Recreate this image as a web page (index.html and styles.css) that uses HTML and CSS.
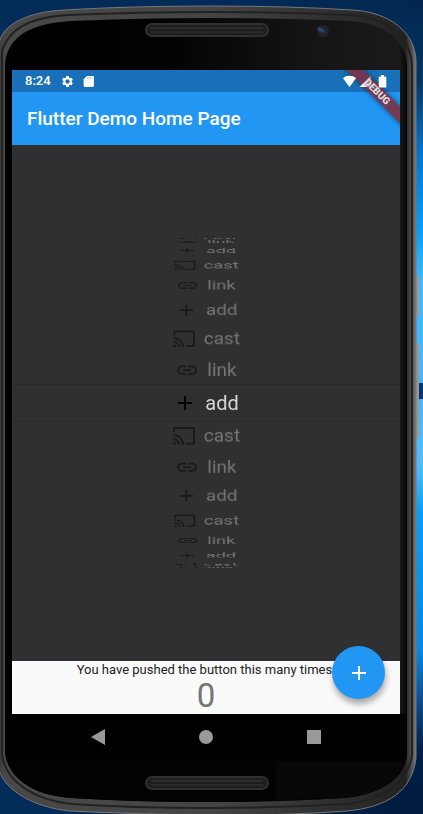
FILE: index.html
```html
<!DOCTYPE html>
<html lang="en">
<head>
<meta charset="utf-8">
<meta name="viewport" content="width=device-width, initial-scale=1">
<title>Flutter Demo Home Page</title>
<link rel="stylesheet" href="styles.css">
</head>
<body>
<svg class="defs" aria-hidden="true">
  <defs>
    <symbol id="cast" viewBox="0 0 24 24"><path d="M21 3H3c-1.100 0-2 .9-2 2v3h2V5h18v14h-7v2h7c1.100 0 2-.9 2-2V5c0-1.100-.9-2-2-2zM1 18v3h3c0-1.660-1.340-3-3-3zm0-4v2c2.760 0 5 2.240 5 5h2c0-3.870-3.130-7-7-7zm0-4v2c4.970 0 9 4.030 9 9h2c0-6.080-4.930-11-11-11z"/></symbol>
    <symbol id="link" viewBox="0 0 24 24"><path d="M3.900 12c0-1.710 1.390-3.100 3.100-3.100h4V7H7c-2.760 0-5 2.240-5 5s2.240 5 5 5h4v-1.900H7c-1.710 0-3.100-1.390-3.100-3.100zM8 13h8v-2H8v2zm9-6h-4v1.900h4c1.710 0 3.100 1.390 3.100 3.100s-1.390 3.100-3.100 3.100h-4V17h4c2.760 0 5-2.240 5-5s-2.240-5-5-5z"/></symbol>
    <symbol id="add" viewBox="0 0 24 24"><path d="M19 13h-6v6h-2v-6H5v-2h6V5h2v6h6v2z"/></symbol>
  </defs>
</svg>
<div class="phone">
  <svg class="shell" viewBox="0 0 423 814" preserveAspectRatio="none" aria-hidden="true">
    <defs>
      <linearGradient id="side" x1="0" x2="1" y1="0" y2="0">
        <stop offset="0" stop-color="#3a3a3a"/><stop offset=".015" stop-color="#484848"/>
        <stop offset=".5" stop-color="#454545"/><stop offset=".975" stop-color="#222"/><stop offset=".988" stop-color="#4c4c4c"/><stop offset="1" stop-color="#777"/>
      </linearGradient>
      <linearGradient id="face" x1="0" x2="1" y1="0" y2="0">
        <stop offset="0" stop-color="#000"/><stop offset=".4" stop-color="#020202"/>
        <stop offset=".75" stop-color="#141414"/><stop offset=".98" stop-color="#1a1a1a"/><stop offset="1" stop-color="#050505"/>
      </linearGradient>
      <linearGradient id="fade" x1="0" x2="1" y1="0" y2="0">
        <stop offset=".4" stop-color="#fff"/><stop offset="1" stop-color="#a08d99"/>
      </linearGradient>
    </defs>
    <path d="M416 276h3v40h-3zM416 343h3v95h-3z" fill="#999"/>
    <path d="M-1 44C2 24 28 12 64 10Q130 6 210 6T352 10C390 12 416 33 416 62V758C412 791 388 807 347 811Q280 816 206 815T70 811C32 807 5 790-1 770Z" fill="url(#side)" stroke="#777"/>
    <path d="M2 52C8 28 32 17 68 15Q138 12 210 12T350 15C386 17 411 37 412 65V755C408 784 382 800 345 804Q278 808 206 808T72 804C34 800 6 782 2 755Z" fill="none" stroke="#222" stroke-width="2"/>
    <path d="M5 65C7 35 33 23 72 21Q140 18 210 18T350 21C384 23 406 40 407 65V754C405 779 380 795 343 798Q278 802 206 802T72 798C34 796 6 778 5 750Z" fill="url(#face)"/>
    <path d="M5 714H407V754C405 779 380 795 343 798Q278 802 206 802T72 798C34 796 6 778 5 750Z" fill="#020202"/>
    <path d="M276 761H405C402 780 378 795 343 798L276 800Z" fill="#070707"/>
    <g fill="#1d1d1d" stroke="#303030" stroke-width="2">
      <rect x="146" y="24" width="122" height="12" rx="6"/>
      <rect x="146" y="777" width="122" height="12" rx="6"/>
    </g>
    <path d="M151 28H263M151 781H263" stroke="#3f3f3f" stroke-width="1"/>
    <path d="M151 32H263M151 785H263" stroke="#393939" stroke-width="1"/>
    <circle cx="323" cy="31" r="6" fill="#20232a"/>
    <ellipse cx="321" cy="30" rx="4" ry="2" fill="#2c4468" transform="rotate(25 321 30)"/>
  </svg>
  <main class="screen">
    <div class="status">
      <span class="time">8:24</span>
      <svg class="status-icon" viewBox="0 0 24 24" aria-hidden="true"><path d="M19.430 12.980c.04-.32.07-.64.07-.98s-.03-.66-.07-.98l2.110-1.650c.19-.15.24-.42.12-.64l-2-3.460c-.12-.22-.39-.3-.61-.22l-2.490 1c-.52-.4-1.080-.73-1.690-.98l-.38-2.650C14.460 2.180 14.250 2 14 2h-4c-.25 0-.46.18-.49.42l-.38 2.650c-.61.25-1.170.59-1.690.98l-2.490-1c-.23-.09-.49 0-.61.22l-2 3.460c-.13.22-.07.49.12.64l2.110 1.650c-.04.32-.07.65-.07.98s.03.66.07.98l-2.110 1.650c-.19.15-.24.42-.12.64l2 3.460c.12.22.39.3.61.22l2.490-1c.52.4 1.080.73 1.690.98l.38 2.650c.03.24.24.42.49.42h4c.25 0 .46-.18.49-.42l.38-2.650c.61-.25 1.170-.59 1.690-.98l2.490 1c.23.09.49 0 .61-.22l2-3.460c.12-.22.07-.49-.12-.64l-2.110-1.650zM12 16c-2.210 0-4-1.790-4-4s1.790-4 4-4 4 1.790 4 4-1.790 4-4 4z"/></svg>
      <svg class="status-icon" viewBox="0 0 24 24" aria-hidden="true"><path d="M20 2H9L3 8v12c0 1.100.9 2 2 2h15c1.100 0 2-.9 2-2V4c0-1.100-.9-2-2-2z"/><path d="M10 4h2v4h-2zM14 4h2v4h-2zM18 4h1v4h-1z" fill="#8bb9de"/></svg>
      <svg class="status-icon wifi" viewBox="0 0 24 24" aria-hidden="true"><path d="M12 22 0 6C7 0 17 0 24 6z"/></svg>
      <svg class="status-icon signal" viewBox="0 0 24 24" aria-hidden="true"><path d="M1 22H22V1z" fill="url(#fade)"/></svg>
      <svg class="status-icon battery" viewBox="0 0 24 24" aria-hidden="true"><path d="M9 0h6v3h4v20H5V3h4z"/></svg>
    </div>
    <header class="appbar"><h1>Flutter Demo Home Page</h1></header>
    <div class="ribbon"><span>DEBUG</span></div>
    <section class="picker">
      <div class="band"></div>
      <ul class="wheel">
        <li><svg><use href="#cast"/></svg>cast</li>
        <li><svg><use href="#link"/></svg>link</li>
        <li><svg><use href="#add"/></svg>add</li>
        <li><svg><use href="#cast"/></svg>cast</li>
        <li><svg><use href="#link"/></svg>link</li>
        <li><svg><use href="#add"/></svg>add</li>
        <li><svg><use href="#cast"/></svg>cast</li>
        <li><svg><use href="#link"/></svg>link</li>
        <li class="selected"><svg><use href="#add"/></svg>add</li>
        <li><svg><use href="#cast"/></svg>cast</li>
        <li><svg><use href="#link"/></svg>link</li>
        <li><svg><use href="#add"/></svg>add</li>
        <li><svg><use href="#cast"/></svg>cast</li>
        <li><svg><use href="#link"/></svg>link</li>
        <li><svg><use href="#add"/></svg>add</li>
        <li><svg><use href="#cast"/></svg>cast</li>
        <li><svg><use href="#link"/></svg>link</li>
      </ul>
    </section>
    <section class="counter">
      <p class="caption">You have pushed the button this many times:</p>
      <p class="count">0</p>
      <button class="fab" type="button" aria-label="Increment"><svg><use href="#add"/></svg></button>
    </section>
  </main>
  <nav class="navbar" aria-label="System navigation">
    <button type="button" aria-label="Back"><svg viewBox="0 0 16 16"><path d="M1 8 15 0V16z"/></svg></button>
    <button type="button" aria-label="Home"><svg viewBox="0 0 16 16"><circle cx="8" cy="8" r="7"/></svg></button>
    <button type="button" aria-label="Overview"><svg viewBox="0 0 16 16"><path d="M1 1h14v14H1z"/></svg></button>
  </nav>
</div>
</body>
</html>
```
FILE: styles.css
```css
* { box-sizing: border-box; }

body {
  margin: 0;
  font-family: Roboto, "Liberation Sans", sans-serif;
  background: linear-gradient(90deg, #042c58 0%, #022a58 60%, transparent 97%),
    linear-gradient(#03274f 0, #043564 10%, #0670c4 18%, #0a9cf5 28%, #45b8fa 35%, #48b4f8 47%, #06376c 47%, #06376c 49%, #48b4f8 49%, #55bcfa 57%, #0a9cf5 63%, #0a86e0 80%, #0b4d90 86%, #02204a 92%, #021a3c 100%);
}

.defs { position: absolute; width: 0; height: 0; }

.phone {
  position: relative;
  display: flex;
  flex-direction: column;
  min-height: 100vh;
  padding: 70px 23px 54px 12px;
}

.shell {
  position: absolute;
  inset: 0;
  width: 100%;
  height: 100%;
}

.screen {
  position: relative;
  flex: 1;
  display: flex;
  flex-direction: column;
  background: #2f3032;
}

.status {
  display: flex;
  align-items: center;
  gap: 8px;
  height: 22px;
  padding: 0 11px 0 13px;
  background: #1a70b8;
  color: #fff;
}

.time { font-size: 13px; font-weight: 500; line-height: 22px; margin-right: 2px; }
.status-icon { width: 13px; height: 13px; fill: #fff; }
.wifi { width: 15px; margin-left: auto; }
.signal { margin: 0 -4px 0 -6px; }
.wifi, .signal, .battery { position: relative; z-index: 1; }

.appbar {
  display: flex;
  align-items: center;
  height: 53px;
  padding: 0 15px;
  background: #2196f3;
}

h1 { margin: 0; font-size: 19px; font-weight: 500; line-height: 24px; color: #fff; }

.ribbon {
  position: absolute;
  top: 0;
  right: 0;
  width: 75px;
  height: 75px;
  overflow: hidden;
}

/* The band lies under the status icons, its label over them. */
.ribbon::before,
.ribbon span {
  position: absolute;
  top: 16px;
  right: -37px;
  width: 120px;
  height: 12px;
  transform: rotate(45deg);
}

.ribbon::before {
  content: "";
  background: #7a3348e8;
  box-shadow: 0 0 5px #0008;
}

.ribbon span {
  z-index: 2;
  color: #e6dfe2;
  font-size: 10px;
  font-weight: 900;
  line-height: 12px;
  text-align: center;
  text-shadow: 0 0 2px #5a2c40;
}

.picker {
  flex: 1;
  display: grid;
  align-items: center;
  perspective: 1500px;
}

.picker > * { grid-area: 1 / 1; }

.band {
  height: 38px;
  border: solid #282a2b;
  border-width: 1px 0;
}

/* A cylinder: every row is turned around the horizontal axis of the wheel. */
.wheel {
  display: grid;
  margin: 0;
  padding: 0;
  list-style: none;
  transform: translateZ(-184px);
  transform-style: preserve-3d;
}

.wheel li {
  grid-area: 1 / 1;
  display: flex;
  align-items: center;
  justify-content: center;
  gap: 8px;
  height: 34px;
  font-size: 19px;
  line-height: 34px;
  color: #747576;
  fill: #191a1b;
  transform: rotateX(calc(var(--step) * 10.3deg)) translateZ(184px);
}

.wheel svg { width: 24px; height: 24px; }
.wheel .selected { font-size: 20px; color: #d3d5d8; fill: #000; }

.wheel li:nth-child(1) { --step: 7.8; }
.wheel li:nth-child(2) { --step: 7; }
.wheel li:nth-child(3) { --step: 6; }
.wheel li:nth-child(4) { --step: 5; }
.wheel li:nth-child(5) { --step: 4; }
.wheel li:nth-child(6) { --step: 3; }
.wheel li:nth-child(7) { --step: 2; }
.wheel li:nth-child(8) { --step: 1; }
.wheel li:nth-child(9) { --step: 0; }
.wheel li:nth-child(10) { --step: -1; }
.wheel li:nth-child(11) { --step: -2; }
.wheel li:nth-child(12) { --step: -3; }
.wheel li:nth-child(13) { --step: -4; }
.wheel li:nth-child(14) { --step: -5; }
.wheel li:nth-child(15) { --step: -6; }
.wheel li:nth-child(16) { --step: -7; }
.wheel li:nth-child(17) { --step: -7.8; }

.counter {
  position: relative;
  height: 53px;
  background: #fafafa;
  text-align: center;
}

.counter p { margin: 0; }
.caption { font-size: 13px; line-height: 17px; color: #222; }
.count { font-size: 33px; line-height: 36px; color: #757575; }

button { padding: 0; border: 0; background: none; cursor: pointer; }

.fab {
  position: absolute;
  right: 15px;
  bottom: 15px;
  display: grid;
  place-items: center;
  width: 53px;
  height: 53px;
  border-radius: 50%;
  background: #2196f3;
  box-shadow: 1px 5px 6px #0005;
  fill: #fff;
}

.fab svg { width: 24px; height: 24px; }

.navbar {
  position: relative;
  display: flex;
  justify-content: space-around;
  align-items: center;
  height: 46px;
  padding: 0 32px;
  background: #000;
}

.navbar svg { display: block; width: 16px; height: 16px; fill: #999; }
```
